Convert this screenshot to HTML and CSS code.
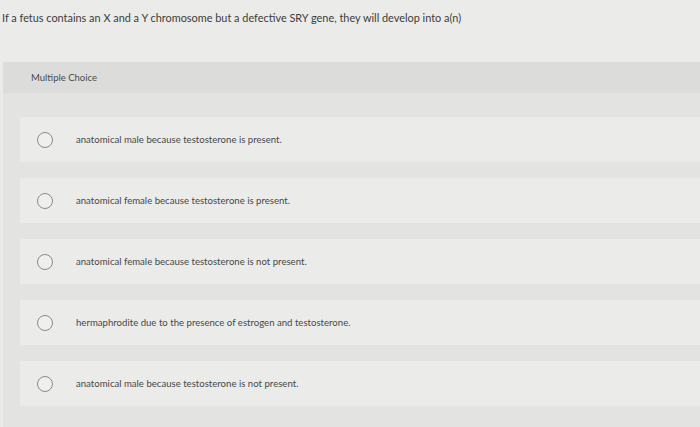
FILE: index.html
```html
<!DOCTYPE html>
<html>
<head>
<meta charset="utf-8">
<link rel="stylesheet" href="styles.css">
</head>
<body>
<div class="page">
  <p class="question">If a fetus contains an X and a Y chromosome but a defective SRY gene, they will develop into a(n)</p>
  <div class="panel">
    <div class="panel-head">Multiple Choice</div>
    <ul class="options">
      <li class="option"><span class="radio"></span><span class="label">anatomical male because testosterone is present.</span></li>
      <li class="option"><span class="radio"></span><span class="label">anatomical female because testosterone is present.</span></li>
      <li class="option"><span class="radio"></span><span class="label">anatomical female because testosterone is not present.</span></li>
      <li class="option"><span class="radio"></span><span class="label">hermaphrodite due to the presence of estrogen and testosterone.</span></li>
      <li class="option"><span class="radio"></span><span class="label">anatomical male because testosterone is not present.</span></li>
    </ul>
  </div>
</div>
</body>
</html>
```
FILE: styles.css
```css
html, body {
  margin: 0;
  padding: 0;
}
body {
  width: 700px;
  height: 427px;
  overflow: hidden;
  background: #ebebe9;
  font-family: "Lato", "Liberation Sans", sans-serif;
}
.page {
  display: flex;
  flex-direction: column;
}
.question {
  margin: 0;
  padding: 11px 0 0 2px;
  height: 62px;
  box-sizing: border-box;
  font-size: 10.9px;
  color: #3c3c3c;
  line-height: 14px;
}
.panel {
  margin-left: 3px;
  background: #e3e4e2;
  height: 365px;
}
.panel-head {
  background: #dcdddb;
  height: 31px;
  display: flex;
  align-items: center;
  padding-left: 28px;
  font-size: 9.5px;
  color: #4a4a4a;
}
.options {
  list-style: none;
  margin: 0;
  padding: 24px 0 0 17px;
  display: flex;
  flex-direction: column;
  gap: 16px;
}
.option {
  background: #ebecea;
  height: 45px;
  display: flex;
  align-items: center;
  padding-left: 17px;
}
.radio {
  width: 14px;
  height: 14px;
  border: 1.5px solid #8a8a8a;
  border-radius: 50%;
  background: #efefee;
  flex: none;
}
.label {
  margin-left: 23px;
  font-size: 9.6px;
  color: #474747;
}
```
